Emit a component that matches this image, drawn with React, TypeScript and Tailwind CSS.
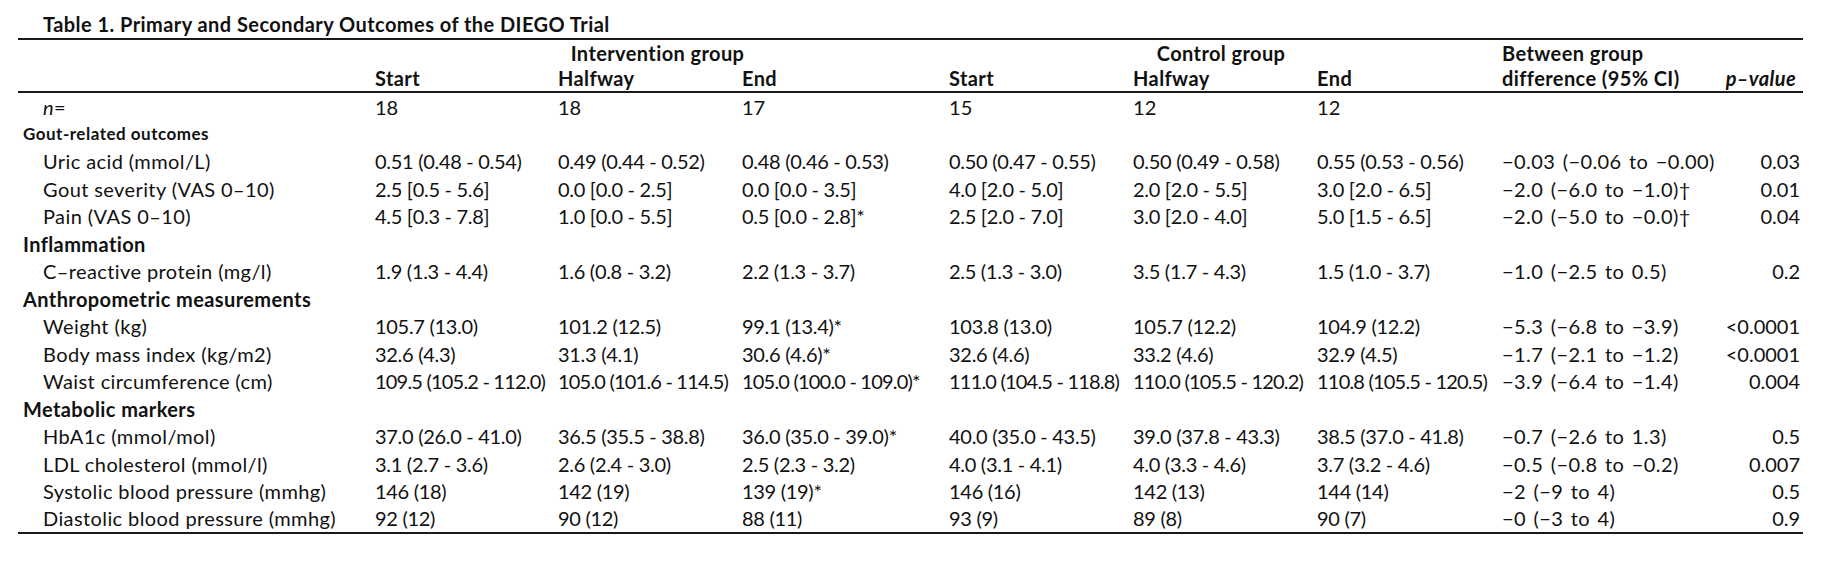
import React from "react";

type Row =
  | { kind: "group"; label: string; small?: boolean }
  | { kind: "data"; label: React.ReactNode; cells: string[]; tight?: boolean };

const rows: Row[] = [
  { kind: "group", label: "Gout-related outcomes", small: true },
  {
    kind: "data",
    label: "Uric acid (mmol/L)",
    cells: ["0.51 (0.48 - 0.54)", "0.49 (0.44 - 0.52)", "0.48 (0.46 - 0.53)", "0.50 (0.47 - 0.55)", "0.50 (0.49 - 0.58)", "0.55 (0.53 - 0.56)", "\u22120.03 (\u22120.06 to \u22120.00)", "0.03"],
  },
  {
    kind: "data",
    label: "Gout severity (VAS 0\u201310)",
    cells: ["2.5 [0.5 - 5.6]", "0.0 [0.0 - 2.5]", "0.0 [0.0 - 3.5]", "4.0 [2.0 - 5.0]", "2.0 [2.0 - 5.5]", "3.0 [2.0 - 6.5]", "\u22122.0 (\u22126.0 to \u22121.0)\u2020", "0.01"],
  },
  {
    kind: "data",
    label: "Pain (VAS 0\u201310)",
    cells: ["4.5 [0.3 - 7.8]", "1.0 [0.0 - 5.5]", "0.5 [0.0 - 2.8]*", "2.5 [2.0 - 7.0]", "3.0 [2.0 - 4.0]", "5.0 [1.5 - 6.5]", "\u22122.0 (\u22125.0 to \u22120.0)\u2020", "0.04"],
  },
  { kind: "group", label: "Inflammation" },
  {
    kind: "data",
    label: "C\u2013reactive protein (mg/l)",
    cells: ["1.9 (1.3 - 4.4)", "1.6 (0.8 - 3.2)", "2.2 (1.3 - 3.7)", "2.5 (1.3 - 3.0)", "3.5 (1.7 - 4.3)", "1.5 (1.0 - 3.7)", "\u22121.0 (\u22122.5 to 0.5)", "0.2"],
  },
  { kind: "group", label: "Anthropometric measurements" },
  {
    kind: "data",
    label: "Weight (kg)",
    cells: ["105.7 (13.0)", "101.2 (12.5)", "99.1 (13.4)*", "103.8 (13.0)", "105.7 (12.2)", "104.9 (12.2)", "\u22125.3 (\u22126.8 to \u22123.9)", "<0.0001"],
  },
  {
    kind: "data",
    label: "Body mass index (kg/m2)",
    cells: ["32.6 (4.3)", "31.3 (4.1)", "30.6 (4.6)*", "32.6 (4.6)", "33.2 (4.6)", "32.9 (4.5)", "\u22121.7 (\u22122.1 to \u22121.2)", "<0.0001"],
  },
  {
    kind: "data",
    label: "Waist circumference (cm)",
    tight: true,
    cells: ["109.5 (105.2 - 112.0)", "105.0 (101.6 - 114.5)", "105.0 (100.0 - 109.0)*", "111.0 (104.5 - 118.8)", "110.0 (105.5 - 120.2)", "110.8 (105.5 - 120.5)", "\u22123.9 (\u22126.4 to \u22121.4)", "0.004"],
  },
  { kind: "group", label: "Metabolic markers" },
  {
    kind: "data",
    label: "HbA1c (mmol/mol)",
    cells: ["37.0 (26.0 - 41.0)", "36.5 (35.5 - 38.8)", "36.0 (35.0 - 39.0)*", "40.0 (35.0 - 43.5)", "39.0 (37.8 - 43.3)", "38.5 (37.0 - 41.8)", "\u22120.7 (\u22122.6 to 1.3)", "0.5"],
  },
  {
    kind: "data",
    label: "LDL cholesterol (mmol/l)",
    cells: ["3.1 (2.7 - 3.6)", "2.6 (2.4 - 3.0)", "2.5 (2.3 - 3.2)", "4.0 (3.1 - 4.1)", "4.0 (3.3 - 4.6)", "3.7 (3.2 - 4.6)", "\u22120.5 (\u22120.8 to \u22120.2)", "0.007"],
  },
  {
    kind: "data",
    label: "Systolic blood pressure (mmhg)",
    cells: ["146 (18)", "142 (19)", "139 (19)*", "146 (16)", "142 (13)", "144 (14)", "\u22122 (\u22129 to 4)", "0.5"],
  },
  {
    kind: "data",
    label: "Diastolic blood pressure (mmhg)",
    cells: ["92 (12)", "90 (12)", "88 (11)", "93 (9)", "89 (8)", "90 (7)", "\u22120 (\u22123 to 4)", "0.9"],
  },
];

export default function App() {
  return (
    <div
      className="w-[1830px] h-[565px] bg-white text-[#111] pl-[18px] pt-[11px]"
      style={{ fontFamily: "Lato, 'Open Sans', sans-serif" }}
    >
      <div className="w-[1785px]">
        <div className="pl-[25px] text-[20px] font-bold leading-[27px] tracking-[0.44px]">
          Table 1. Primary and Secondary Outcomes of the DIEGO Trial
        </div>
        <table className="table-fixed border-collapse w-[1785px] text-[20px] leading-[24px] tracking-[0.4px]">
          <colgroup>
            <col className="w-[357px]" />
            <col className="w-[183px]" />
            <col className="w-[184px]" />
            <col className="w-[207px]" />
            <col className="w-[184px]" />
            <col className="w-[184px]" />
            <col className="w-[185px]" />
            <col className="w-[200px]" />
            <col className="w-[101px]" />
          </colgroup>
          <thead>
            <tr className="h-[26.5px] border-t-2 border-[#1a1a1a] font-bold">
              <th className="p-0"></th>
              <th colSpan={3} className="p-0 pr-[9px] text-center font-bold whitespace-nowrap align-middle">
                Intervention group
              </th>
              <th colSpan={3} className="p-0 pr-[9px] text-center font-bold whitespace-nowrap align-middle">
                Control group
              </th>
              <th className="p-0 text-left font-bold whitespace-nowrap align-middle">Between group</th>
              <th className="p-0"></th>
            </tr>
            <tr className="h-[26.5px] border-b-2 border-[#1a1a1a]">
              <th className="p-0"></th>
              {["Start", "Halfway", "End", "Start", "Halfway", "End"].map((h, i) => (
                <th key={i} className="p-0 text-left font-bold whitespace-nowrap align-middle">
                  {h}
                </th>
              ))}
              <th className="p-0 text-left font-bold whitespace-nowrap align-middle">difference (95% CI)</th>
              <th className="p-0 pr-[7px] text-right font-bold italic whitespace-nowrap align-middle">p{"\u2013"}value</th>
            </tr>
          </thead>
          <tbody>
            <tr className="h-[28px]">
              <td className="p-0 pl-[25px] align-middle">
                <span className="italic">n</span>=
              </td>
              {["18", "18", "17", "15", "12", "12"].map((v, i) => (
                <td key={i} className="p-0 align-middle whitespace-nowrap tracking-normal">
                  {v}
                </td>
              ))}
              <td className="p-0"></td>
              <td className="p-0"></td>
            </tr>
            {rows.map((r, idx) =>
              r.kind === "group" ? (
                <tr key={idx} className="h-[27.5px]">
                  <td
                    colSpan={9}
                    className={
                      r.small
                        ? "p-0 pl-[5px] align-middle font-bold text-[17px] tracking-[0.5px] whitespace-nowrap"
                        : "p-0 pl-[5px] align-middle font-bold whitespace-nowrap"
                    }
                  >
                    {r.label}
                  </td>
                </tr>
              ) : (
                <tr
                  key={idx}
                  className={idx === rows.length - 1 ? "h-[27.5px] border-b-2 border-[#1a1a1a]" : "h-[27.5px]"}
                >
                  <td className="p-0 pl-[25px] align-middle whitespace-nowrap">{r.label}</td>
                  {r.cells.slice(0, 6).map((c, i) => (
                    <td
                      key={i}
                      className={
                        r.tight
                          ? "p-0 align-middle whitespace-nowrap overflow-visible tracking-[-0.8px]"
                          : "p-0 align-middle whitespace-nowrap overflow-visible tracking-[-0.3px]"
                      }
                    >
                      {c}
                    </td>
                  ))}
                  <td className="p-0 align-middle whitespace-nowrap overflow-visible tracking-[0.4px] [word-spacing:2px]">
                    {r.cells[6]}
                  </td>
                  <td className="p-0 pr-[3px] text-right align-middle whitespace-nowrap tracking-normal">{r.cells[7]}</td>
                </tr>
              )
            )}
          </tbody>
        </table>
      </div>
    </div>
  );
}
